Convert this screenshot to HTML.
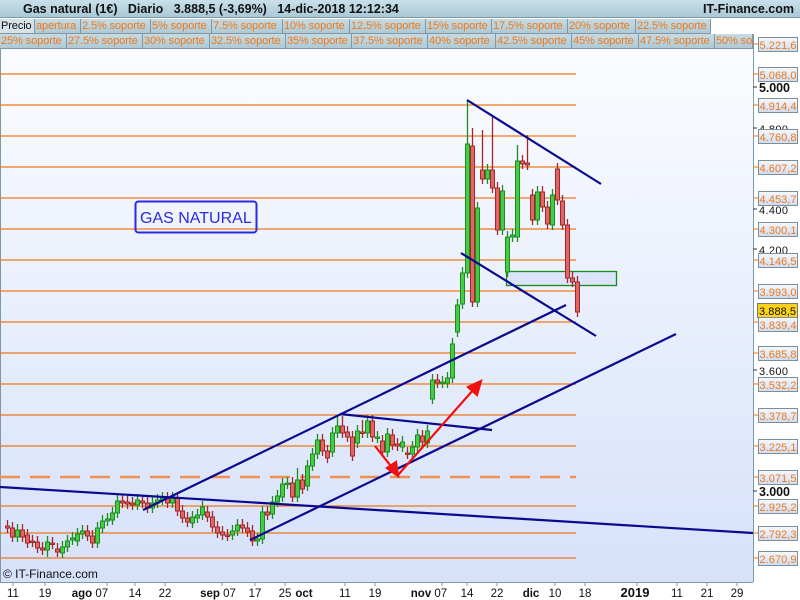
<!DOCTYPE html>
<html><head><meta charset="utf-8"><style>
*{margin:0;padding:0;box-sizing:border-box}
body{width:800px;height:600px;overflow:hidden;background:#fff;font-family:"Liberation Sans",Arial,sans-serif;position:relative}
#top{position:absolute;left:0;top:0;width:800px;height:18px;background:linear-gradient(#c9e0ea,#a9c9d6);border-bottom:1px solid #7d98a6}
#top .t{position:absolute;left:23px;top:2px;font-size:12.5px;font-weight:bold;color:#111;white-space:pre}
#top .r{position:absolute;right:6px;top:2px;font-size:12.5px;font-weight:bold;color:#111}
.row{position:absolute;left:0;height:15px;display:flex}
.row div{height:15px;border-right:1px solid #7f98a4;border-bottom:1px solid #7f98a4;background:linear-gradient(#c6dbe4,#aecad6);color:#f07818;font-size:11px;line-height:14px;padding-left:1px;white-space:nowrap;overflow:hidden;letter-spacing:-0.1px}
svg{position:absolute;left:0;top:0}
</style></head><body>
<svg width="800" height="600" viewBox="0 0 800 600" font-family="Liberation Sans, Arial, sans-serif">
<defs>
<linearGradient id="bg" x1="0" y1="0" x2="0" y2="1"><stop offset="0" stop-color="#fbfcff"/><stop offset="1" stop-color="#d6e1fa"/></linearGradient>
<linearGradient id="lb" x1="0" y1="0" x2="0" y2="1"><stop offset="0" stop-color="#f4f8ff"/><stop offset="1" stop-color="#cfdcf0"/></linearGradient>
</defs>
<rect x="0" y="48" width="753" height="534" fill="url(#bg)"/>
<rect x="753" y="18" width="47" height="582" fill="#fff"/>
<line x1="0.5" y1="48" x2="0.5" y2="582" stroke="#7d98a6"/>
<line x1="753.5" y1="34" x2="753.5" y2="582" stroke="#7d98a6"/>
<line x1="0" y1="582.5" x2="753" y2="582.5" stroke="#7d98a6"/>
<g stroke="#f07818" stroke-width="1.2">
<line x1="0" y1="74" x2="576" y2="74"/><line x1="0" y1="105" x2="576" y2="105"/><line x1="0" y1="136" x2="576" y2="136"/><line x1="0" y1="167" x2="576" y2="167"/><line x1="0" y1="198" x2="576" y2="198"/><line x1="0" y1="229" x2="576" y2="229"/><line x1="0" y1="260" x2="576" y2="260"/><line x1="0" y1="291" x2="576" y2="291"/><line x1="0" y1="322" x2="576" y2="322"/><line x1="0" y1="353" x2="576" y2="353"/><line x1="0" y1="384" x2="576" y2="384"/><line x1="0" y1="415" x2="576" y2="415"/><line x1="0" y1="446" x2="576" y2="446"/><line x1="0" y1="506" x2="576" y2="506"/><line x1="0" y1="533" x2="576" y2="533"/><line x1="0" y1="558" x2="576" y2="558"/>
</g>
<line x1="0" y1="477" x2="576" y2="477" stroke="#f09050" stroke-width="2.4" stroke-dasharray="20,10"/>
<rect x="135.5" y="201.5" width="121" height="31" rx="3" fill="none" stroke="#2a2ae0" stroke-width="2"/>
<text x="140" y="223" font-size="16" fill="#2a2ae0">GAS NATURAL</text>
<rect x="506.5" y="271.5" width="110" height="14" fill="#dbe4fb" stroke="#1a8a1a" stroke-width="1.3"/>
<g id="c"></g>
<g stroke="#0a0a90" stroke-width="2.2" fill="none">
<line x1="0" y1="487" x2="753" y2="533"/>
<line x1="250" y1="540" x2="676" y2="334"/>
<line x1="143" y1="510" x2="566" y2="305"/>
<line x1="340" y1="414" x2="492" y2="430"/>
<line x1="467" y1="100" x2="601" y2="184"/>
<line x1="461" y1="253" x2="596" y2="336"/>
</g>
<g stroke="#f01010" stroke-width="2.2" fill="#f01010">
<line x1="375" y1="446" x2="394" y2="470"/><polygon points="398,476 387,468 396,462"/>
<line x1="398" y1="475" x2="474" y2="389"/><polygon points="481,381 477,395 468,387"/>
</g>
<text x="3" y="578" font-size="12" fill="#111">© IT-Finance.com</text>
<g font-size="11.5" fill="#111" text-anchor="middle">
<text x="13" y="597">11</text><text x="45" y="597">19</text><text x="90" y="597"><tspan font-weight="bold">ago</tspan> 07</text><text x="135" y="597">14</text><text x="165" y="597">22</text><text x="218" y="597"><tspan font-weight="bold">sep</tspan> 07</text><text x="255" y="597">17</text><text x="285" y="597">25</text><text x="304" y="597" font-weight="bold">oct</text><text x="345" y="597">11</text><text x="375" y="597">19</text><text x="429" y="597"><tspan font-weight="bold">nov</tspan> 07</text><text x="467" y="597">14</text><text x="497" y="597">22</text><text x="531" y="597" font-weight="bold">dic</text><text x="555" y="597">10</text><text x="585" y="597">18</text><text x="635" y="597" font-weight="bold" font-size="13">2019</text><text x="677" y="597">11</text><text x="707" y="597">21</text><text x="737" y="597">29</text>
</g>
<g stroke="#7d98a6"><path d="M13 583v3M45 583v3M107 583v3M135 583v3M165 583v3M222 583v3M255 583v3M285 583v3M345 583v3M375 583v3M442 583v3M467 583v3M497 583v3M555 583v3M585 583v3M637 583v3M677 583v3M707 583v3M737 583v3"/></g>
<g font-size="11" fill="#111">
<text x="759" y="92" font-weight="bold" font-size="12.5" textLength="31">5.000</text>
<text x="759" y="133" textLength="29">4.800</text><text x="759" y="214" textLength="29">4.400</text><text x="759" y="254" textLength="29">4.200</text><text x="759" y="375" textLength="29">3.600</text>
<text x="759" y="496" font-weight="bold" font-size="12.5" textLength="31">3.000</text>
<path d="M753 87h4M753 128h4M753 209h4M753 249h4M753 370h4M753 491h4" stroke="#333"/>
</g>
<rect x="757.5" y="303.5" width="40" height="14" fill="#ffd21a" stroke="#777"/>
<text x="759" y="315" font-size="11" fill="#111" textLength="37">3.888,5</text>
<rect x="4" y="9" width="5" height="7" fill="#e05050" stroke="#903030"/><line x1="6.5" y1="6" x2="6.5" y2="18" stroke="#903030"/>
<rect x="12" y="5" width="5" height="9" fill="#40d040" stroke="#208020"/><line x1="14.5" y1="2" x2="14.5" y2="17" stroke="#208020"/>
</svg>
<div id="top"><span class="t">Gas natural (1€)   Diario   3.888,5 (-3,69%)   14-dic-2018 12:12:34</span><span class="r">IT-Finance.com</span></div>
<div class="row" style="top:19px"><div style="width:35px;color:#111;background:#d6e2e8">Precio</div><div style="width:46px">apertura</div><div style="width:70px">2.5% soporte</div><div style="width:61px">5% soporte</div><div style="width:71px">7.5% soporte</div><div style="width:67px">10% soporte</div><div style="width:76px">12.5% soporte</div><div style="width:66px">15% soporte</div><div style="width:76px">17.5% soporte</div><div style="width:68px">20% soporte</div><div style="width:75px">22.5% soporte</div></div>
<div class="row" style="top:34px"><div style="width:67px">25% soporte</div><div style="width:76px">27.5% soporte</div><div style="width:67px">30% soporte</div><div style="width:76px">32.5% soporte</div><div style="width:66px">35% soporte</div><div style="width:76px">37.5% soporte</div><div style="width:68px">40% soporte</div><div style="width:76px">42.5% soporte</div><div style="width:67px">45% soporte</div><div style="width:76px">47.5% soporte</div><div style="width:38px">50% soporte</div></div>
<svg width="800" height="600" style="pointer-events:none">
<g font-size="11" font-family="Liberation Sans, Arial, sans-serif">
<g fill="url(#lb)" stroke="#7d8e98">
<rect x="758.5" y="37.5" width="39" height="14"/><rect x="758.5" y="67.5" width="39" height="14"/><rect x="758.5" y="98.5" width="39" height="14"/><rect x="758.5" y="129.5" width="39" height="14"/><rect x="758.5" y="160.5" width="39" height="14"/><rect x="758.5" y="191.5" width="39" height="14"/><rect x="758.5" y="222.5" width="39" height="14"/><rect x="758.5" y="253.5" width="39" height="14"/><rect x="758.5" y="284.5" width="39" height="14"/><rect x="758.5" y="317.5" width="39" height="14"/><rect x="758.5" y="346.5" width="39" height="14"/><rect x="758.5" y="377.5" width="39" height="14"/><rect x="758.5" y="408.5" width="39" height="14"/><rect x="758.5" y="439.5" width="39" height="14"/><rect x="758.5" y="470.5" width="39" height="14"/><rect x="758.5" y="499.5" width="39" height="14"/><rect x="758.5" y="526.5" width="39" height="14"/><rect x="758.5" y="551.5" width="39" height="14"/>
</g>
<g fill="#f07818">
<text x="759.5" y="49" textLength="37">5.221,6</text><text x="759.5" y="79" textLength="37">5.068,0</text><text x="759.5" y="110" textLength="37">4.914,4</text><text x="759.5" y="141" textLength="37">4.760,8</text><text x="759.5" y="172" textLength="37">4.607,2</text><text x="759.5" y="203" textLength="37">4.453,7</text><text x="759.5" y="234" textLength="37">4.300,1</text><text x="759.5" y="265" textLength="37">4.146,5</text><text x="759.5" y="296" textLength="37">3.993,0</text><text x="759.5" y="329" textLength="37">3.839,4</text><text x="759.5" y="358" textLength="37">3.685,8</text><text x="759.5" y="389" textLength="37">3.532,2</text><text x="759.5" y="420" textLength="37">3.378,7</text><text x="759.5" y="451" textLength="37">3.225,1</text><text x="759.5" y="482" textLength="37">3.071,5</text><text x="759.5" y="511" textLength="37">2.925,2</text><text x="759.5" y="538" textLength="37">2.792,3</text><text x="759.5" y="563" textLength="37">2.670,9</text>
</g>
<path d="M753 44h5M753 74h5M753 105h5M753 136h5M753 167h5M753 198h5M753 229h5M753 260h5M753 291h5M753 322h5M753 353h5M753 384h5M753 415h5M753 446h5M753 477h5M753 506h5M753 533h5M753 558h5" stroke="#f07818"/>
</g>
</svg>
<script>
var d=[[5,'r',526,528],[10,'r',528,537],[15,'g',530,537],[20,'r',530,537],[25,'r',535,543],[30,'r',541,542],[35,'r',542,548],[40,'r',548,550],[45,'g',542,550,557],[50,'r',543,544],[55,'r',549,552],[60,'g',547,553],[65,'g',541,547],[70,'g',538,540],[75,'g',534,541],[80,'g',531,534],[85,'r',531,536],[90,'r',536,543],[95,'g',528,543],[100,'g',521,528],[105,'g',519,521],[110,'g',513,520],[115,'g',501,513],[120,'r',501,503],[125,'r',502,504],[130,'r',503,505],[135,'g',500,505],[140,'r',501,503],[145,'r',503,508],[150,'g',503,508],[155,'g',500,503],[160,'g',498,500],[165,'r',498,503],[170,'g',498,503],[175,'r',498,511],[180,'r',511,518],[185,'r',518,522],[190,'g',517,523],[195,'g',515,518],[200,'g',507,515],[205,'r',512,517],[210,'r',517,527],[215,'r',527,533],[220,'r',532,535],[225,'r',535,536],[230,'g',531,535],[235,'g',525,531],[240,'r',525,528],[245,'r',528,532],[250,'r',531,541],[255,'g',539,541],[260,'g',512,539],[265,'r',512,515],[270,'g',502,514],[275,'g',496,502],[280,'g',484,497],[285,'g',483,484],[290,'r',483,497],[295,'g',480,497,468],[300,'r',480,489],[305,'g',466,486],[310,'g',454,466],[315,'g',440,454],[320,'r',440,451],[325,'r',451,458],[330,'g',433,452],[335,'g',426,433,416],[340,'r',426,433,416],[345,'r',432,437],[350,'r',437,456],[355,'g',431,443],[360,'r',432,433,420],[365,'g',421,433],[370,'r',421,437],[375,'g',437,438],[380,'r',441,452],[385,'g',434,452],[390,'r',435,445],[395,'r',444,446],[400,'g',442,447],[405,'r',453,454],[410,'g',447,454],[415,'g',435,447],[420,'r',436,442],[425,'g',431,443],[430,'g',380,399],[435,'r',380,383],[440,'g',382,383],[445,'g',378,383],[450,'g',344,378],[455,'g',305,332],[460,'g',273,304],[465,'g',144,273,100],[470,'r',146,302,128],[475,'g',208,302],[480,'r',170,179,130],[485,'g',170,179],[490,'r',170,188,117],[495,'r',188,230],[500,'g',191,230],[505,'g',237,272],[510,'g',235,237],[515,'g',161,237,145],[520,'r',161,164],[525,'r',163,165,135],[530,'r',195,220],[535,'g',192,220],[540,'r',192,207],[545,'r',207,224],[550,'g',195,225],[555,'r',169,200],[560,'r',201,225],[565,'r',225,278],[570,'r',278,282],[575,'r',282,312]];
var s='';d.forEach(function(c){var x=c[0]+2,col=c[1]=='g'?['#44cc44','#1f8a1f']:['#e26464','#a02828'];var t=Math.min(c[2],c[3]),b=Math.max(c[2],c[3]);var hi=t-6,lo=b+5;if(c[4]){if(c[4]<t)hi=c[4];else lo=c[4];}
s+='<line x1="'+(x+0.5)+'" y1="'+hi+'" x2="'+(x+0.5)+'" y2="'+lo+'" stroke="'+col[1]+'" stroke-width="1.3"/>';s+='<rect x="'+(x-1.5)+'" y="'+t+'" width="4" height="'+Math.max(b-t,1.5)+'" fill="'+col[0]+'" stroke="'+col[1]+'" stroke-width="1"/>';});
document.getElementById('c').innerHTML=s;
</script>
</body></html>
